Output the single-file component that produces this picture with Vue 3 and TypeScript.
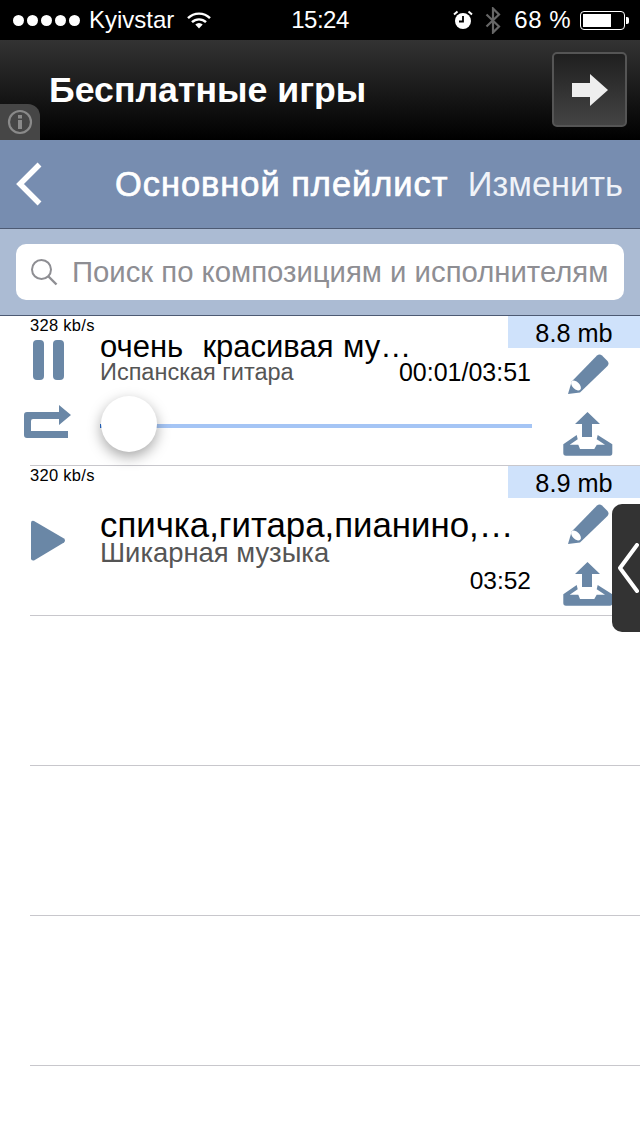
<script setup lang="ts">
interface Track {
  rate: string;
  size: string;
  title: string;
  artist: string;
  time: string;
  playing: boolean;
}

const tracks: Track[] = [
  { rate: '328 kb/s', size: '8.8 mb', title: 'очень  красивая му…', artist: 'Испанская гитара', time: '00:01/03:51', playing: true },
  { rate: '320 kb/s', size: '8.9 mb', title: 'спичка,гитара,пианино,…', artist: 'Шикарная музыка', time: '03:52', playing: false },
];
const emptyRows = [1, 2, 3];
</script>

<template>
  <div class="screen">
    <header class="status">
      <div class="status-side">
        <span class="dots"><i v-for="n in 5" :key="n"></i></span>
        <span class="carrier">Kyivstar</span>
        <svg class="wifi" width="24" height="17" viewBox="0 0 24 17">
          <path d="M1 6.2a15.5 15.5 0 0 1 22 0" fill="none" stroke="#fff" stroke-width="2.4" />
          <path d="M5 10.2a10 10 0 0 1 14 0" fill="none" stroke="#fff" stroke-width="2.4" />
          <path d="M8.3 12.6a5.2 5.2 0 0 1 7.4 0L12 16.6z" fill="#fff" />
        </svg>
      </div>
      <div class="clock">15:24</div>
      <div class="status-side right">
        <svg class="alarm" width="20" height="20" viewBox="0 0 20 20">
          <circle cx="10" cy="11" r="8" fill="#fff" />
          <path d="M10 6v5.5H6" fill="none" stroke="#000" stroke-width="1.8" />
          <path d="M1 4.5 4.5 1.5M19 4.5 15.500 1.500" stroke="#fff" stroke-width="2" />
        </svg>
        <svg class="bt" width="16" height="27" viewBox="0 0 16 27">
          <path d="M1.500 7.500 14 19.500 8 25.500V1.500l6 6L1.500 19.500" fill="none" stroke="#666" stroke-width="2.200" />
        </svg>
        <span class="percent">68 %</span>
        <span class="battery"><b></b></span>
      </div>
    </header>

    <section class="banner">
      <h1>Бесплатные игры</h1>
      <button class="go">
        <svg width="36" height="32" viewBox="0 0 36 32"><path d="M0 9h18V0l18 16-18 16V23H0z" fill="#eee" /></svg>
      </button>
      <div class="info-tab">
        <svg width="26" height="26" viewBox="0 0 26 26">
          <circle cx="13" cy="13" r="11" fill="none" stroke="#8a8a8a" stroke-width="2.200" />
          <path d="M11 11h4v9h-4zM11 6h4v3.500h-4z" fill="#8a8a8a" />
        </svg>
      </div>
    </section>

    <nav class="navbar">
      <svg class="back" width="28" height="44" viewBox="0 0 28 44"><path d="M24.500 2.500 5 22l19.500 19.500" fill="none" stroke="#fff" stroke-width="5.500" /></svg>
      <span class="nav-title">Основной плейлист</span>
      <span class="nav-edit">Изменить</span>
    </nav>

    <div class="searchbar">
      <div class="searchbox">
        <svg width="28" height="28" viewBox="0 0 28 28">
          <circle cx="11.500" cy="11.500" r="9.500" fill="none" stroke="#8e8e93" stroke-width="2" />
          <path d="m18.500 18.500 8 8" stroke="#8e8e93" stroke-width="2.400" />
        </svg>
        <span>Поиск по композициям и исполнителям</span>
      </div>
    </div>

    <main class="list">
      <article v-for="t in tracks" :key="t.rate" class="track" :class="{ playing: t.playing }">
        <div class="col-left">
          <span class="rate">{{ t.rate }}</span>
          <svg v-if="t.playing" class="pause" width="31" height="40" viewBox="0 0 31 40">
            <rect width="11" height="40" rx="4" />
            <rect x="20" width="11" height="40" rx="4" />
          </svg>
          <svg v-else class="play" width="35" height="41" viewBox="0 0 35 41">
            <path d="M0 3q0-3 3-2l30 17.500q2 2 0 4L3 40.500q-3 .5-3-2z" />
          </svg>
          <svg v-if="t.playing" class="repeat" width="48" height="34" viewBox="0 0 48 34">
            <path d="M35 0l12 10-12 10v-6H9q-2 0-2 2v10h37v7H3q-3 0-3-3V10q0-3 3-3h32z" />
          </svg>
        </div>

        <div class="col-mid">
          <div class="title">{{ t.title }}</div>
          <div class="meta">
            <span class="artist">{{ t.artist }}</span>
            <span class="time">{{ t.time }}</span>
          </div>
          <div v-if="t.playing" class="slider"><i class="progress"></i><i class="knob"></i></div>
        </div>

        <div class="col-right">
          <div class="size">{{ t.size }}</div>
          <svg class="pencil" width="41" height="41" viewBox="0 0 41 41">
            <path d="M29 1.500q2.500-2 5 0l5.500 5.500q2 2.500 0 5L12 38.500 0 40l3.700-12.500z" />
            <ellipse cx="8" cy="31.500" rx="6" ry="3.500" transform="rotate(45 8 31.500)" fill="#fff" />
          </svg>
          <svg class="upload" width="50" height="44" viewBox="0 0 50 44">
            <path d="M24.500 0 37 12h-8v13H19V12h-7z" />
            <path d="M13.700 23 .3 32.300V41q0 2.700 2.700 2.700h44q2.300 0 2.300-2.700v-8.700L34.700 23l-1 4.300 8.300 5.400h-8.300L31.300 37H17l-1.700-4.300H6.700l8-5.400z" />
          </svg>
        </div>
      </article>
      <div v-for="n in emptyRows" :key="n" class="empty"></div>
    </main>

    <div class="drawer-tab">
      <svg width="22" height="50" viewBox="0 0 22 50"><path d="M20 2 3 25l17 23" fill="none" stroke="#fff" stroke-width="4" stroke-linecap="round" stroke-linejoin="round" /></svg>
    </div>
  </div>
</template>

<style scoped>
.screen {
  position: relative;
  width: 640px;
  height: 1136px;
  overflow: hidden;
  background: #fff;
  font-family: "Liberation Sans", Arial, sans-serif;
  color: #000;
}

.status {
  height: 40px;
  background: #000;
  color: #fff;
  display: grid;
  grid-template-columns: 1fr auto 1fr;
  align-items: center;
  font-size: 24px;
}
.clock {
  letter-spacing: -0.5px;
}
.status-side {
  display: flex;
  align-items: center;
  padding-left: 13px;
}
.status-side.right {
  justify-content: flex-end;
  padding: 0 15px 0 0;
}
.dots {
  display: flex;
  gap: 3px;
}
.dots i {
  width: 11px;
  height: 11px;
  border-radius: 50%;
  background: #fff;
}
.carrier {
  margin-left: 9px;
}
.wifi {
  margin-left: 13px;
}
.alarm {
  margin-right: 12px;
}
.bt {
  margin-right: 13px;
}
.percent {
  margin-right: 9px;
  letter-spacing: 0.5px;
}
.battery {
  position: relative;
  width: 45px;
  height: 19px;
  box-sizing: border-box;
  border: 1px solid #fff;
  border-radius: 4px;
  padding: 2px;
  display: flex;
}
.battery::after {
  content: "";
  position: absolute;
  right: -5px;
  top: 5px;
  width: 3px;
  height: 7px;
  background: #fff;
  border-radius: 0 2px 2px 0;
}
.battery b {
  width: 28px;
  background: #fff;
}

.banner {
  position: relative;
  height: 100px;
  box-sizing: border-box;
  padding: 12px 13px 0 49px;
  display: flex;
  justify-content: space-between;
  background: linear-gradient(#333, #000);
}
.banner h1 {
  margin: 19px 0 0;
  font-size: 35.700px;
  line-height: 38px;
  font-weight: 700;
  color: #fff;
}
.go {
  width: 75px;
  height: 75px;
  padding: 0;
  box-sizing: border-box;
  border: 2px solid #555;
  border-radius: 5px;
  background: linear-gradient(#1f1f1f, #444);
  display: flex;
  align-items: center;
  justify-content: center;
}
.info-tab {
  position: absolute;
  left: 0;
  bottom: 0;
  width: 40px;
  height: 36px;
  background: #464646;
  border-top-right-radius: 12px;
  display: flex;
  align-items: center;
  justify-content: center;
}

.navbar {
  height: 89px;
  box-sizing: border-box;
  background: #778db0;
  border-bottom: 1px solid #4d5a73;
  display: flex;
  align-items: center;
  color: #fff;
  padding: 0 17px 0 15px;
}
.nav-title {
  margin-left: 72px;
  font-size: 34.400px;
  letter-spacing: 1px;
  -webkit-text-stroke: 0.7px #fff;
  white-space: nowrap;
}
.nav-edit {
  margin-left: auto;
  font-size: 34.400px;
  color: #f0f3f8;
}

.searchbar {
  height: 87px;
  box-sizing: border-box;
  background: #abbbd3;
  border-bottom: 1px solid #4d5a73;
  padding: 15px 16px 0;
}
.searchbox {
  height: 56px;
  background: #fff;
  border-radius: 10px;
  display: flex;
  align-items: center;
  padding-left: 14px;
  gap: 14px;
  font-size: 29.300px;
  color: #8e8e93;
  white-space: nowrap;
}

.track {
  height: 150px;
  box-sizing: border-box;
  display: grid;
  grid-template-columns: 70px 1fr 100px;
  margin-left: 30px;
  border-bottom: 1px solid #c8c7cc;
}
.empty {
  height: 150px;
  box-sizing: border-box;
  margin-left: 30px;
  border-bottom: 1px solid #c8c7cc;
}
.col-left {
  padding-top: 2px;
  display: flex;
  flex-direction: column;
  align-items: flex-start;
}
.rate {
  font-size: 16.500px;
  line-height: 15px;
  letter-spacing: 0.3px;
  white-space: nowrap;
}
.col-left svg,
.col-right svg {
  fill: #6a87a6;
}
.pause {
  margin: 7px 0 0 3px;
}
.repeat {
  margin: 25px 0 0 -6px;
}
.play {
  margin: 37px 0 0 1px;
}
.col-mid {
  min-width: 0;
  display: flex;
  flex-direction: column;
  padding-top: 17px;
}
.title {
  font-size: 31px;
  line-height: 28px;
  word-spacing: 1px;
  white-space: pre;
}
.meta {
  display: flex;
  justify-content: space-between;
  align-items: center;
  padding-right: 9px;
}
.artist {
  font-size: 23.500px;
  line-height: 23px;
  color: #555;
}
.time {
  font-size: 25px;
  line-height: 23px;
}
.track:not(.playing) .col-mid {
  padding-top: 43px;
}
.track:not(.playing) .title {
  font-size: 34.800px;
  line-height: 31px;
}
.track:not(.playing) .meta {
  flex-direction: column;
  align-items: stretch;
}
.track:not(.playing) .artist {
  font-size: 27.400px;
  line-height: 26px;
}
.track:not(.playing) .time {
  font-size: 24.500px;
  line-height: 26px;
  margin-top: 2px;
  text-align: right;
}
.slider {
  position: relative;
  height: 4px;
  margin: 40px 8px 0 0;
  background: #a5c5f5;
}
.progress {
  position: absolute;
  left: 0;
  top: 0;
  width: 2px;
  height: 4px;
  background: #2a6fd0;
}
.knob {
  position: absolute;
  left: 1px;
  top: -28px;
  width: 56px;
  height: 56px;
  border-radius: 50%;
  background: #fff;
  box-shadow: 0 5px 14px rgba(0, 0, 0, 0.35);
}
.col-right {
  display: flex;
  flex-direction: column;
  align-items: flex-start;
}
.size {
  margin-left: -32px;
  width: 132px;
  height: 32px;
  flex: none;
  background: #cfe2fb;
  font-size: 25.300px;
  line-height: 35px;
  text-align: center;
}
.pencil {
  margin: 6px 0 0 28px;
}
.upload {
  margin: 17px 0 0 23px;
}

.drawer-tab {
  position: absolute;
  right: 0;
  top: 504px;
  width: 28px;
  height: 128px;
  background: #333;
  border-radius: 10px 0 0 10px;
  display: flex;
  align-items: center;
  justify-content: flex-end;
  padding-right: 1px;
  box-sizing: border-box;
}
</style>
